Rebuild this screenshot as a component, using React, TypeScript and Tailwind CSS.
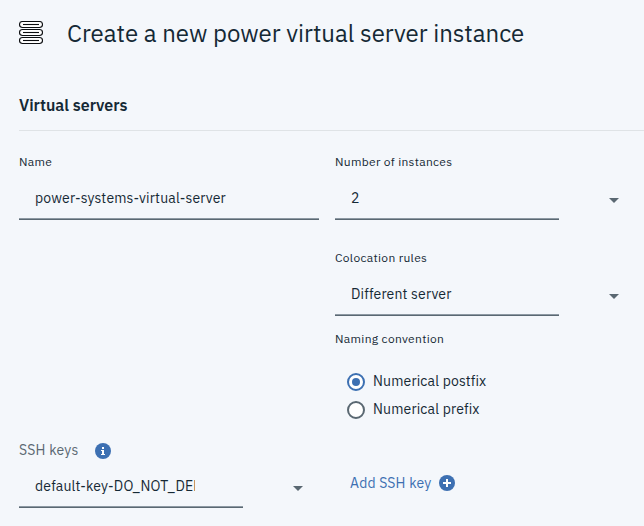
import React from "react";

function ServerIcon() {
  return (
    <svg width="24" height="24" viewBox="0 0 24 24" fill="none" stroke="#0b0d10" strokeWidth="1.1" className="mt-[21px] shrink-0 self-start">
      {[0.5, 8.5, 16.5].map((y) => (
        <g key={y}>
          <rect x="0.5" y={y} width="23" height="6" rx="3" fill="#fff" />
          <path d={`M4 ${y + 3}H20`} />
        </g>
      ))}
    </svg>
  );
}

function Caret() {
  return (
    <svg width="10" height="5" viewBox="0 0 10 5" fill="#5a6872" className="shrink-0">
      <path d="M0 0h10L5 5z" />
    </svg>
  );
}

function Label({ children }: { children: React.ReactNode }) {
  return <div className="h-4 whitespace-nowrap text-[12px] leading-4 tracking-[0.32px]">{children}</div>;
}

const field =
  "flex h-10 items-center whitespace-nowrap border-b border-[#5a6872] pb-0.5 pl-4 text-[14px] tracking-[0.16px] shadow-[inset_0_-1px_0_#8d99a3]";

function Radio({ label, checked = false }: { label: string; checked?: boolean }) {
  return (
    <label className="flex h-7 items-center text-[14px]">
      <span
        className={
          "flex size-[18px] items-center justify-center rounded-full border-2 bg-white " +
          (checked ? "border-[#3d70b2]" : "border-[#5a6872]")
        }
      >
        {checked && <span className="size-2 rounded-full bg-[#3d70b2]" />}
      </span>
      <span className="ml-2 whitespace-nowrap pb-0.5 tracking-[0.16px]">{label}</span>
    </label>
  );
}

export default function App() {
  return (
    <main className="h-[526px] w-[644px] overflow-hidden bg-[#f4f7fb] pl-[19px] font-['IBM_Plex_Sans',Roboto,sans-serif] text-[#152935]">
      <header className="flex h-[67px] items-center gap-6">
        <ServerIcon />
        <h1 className="whitespace-nowrap pb-0.5 text-[24px] leading-8 font-normal">
          Create a new power virtual server instance
        </h1>
      </header>
      <h2 className="flex h-16 items-end border-b border-[#dfe3e6] pb-[13px] text-[16px] leading-6 font-semibold">
        Virtual servers
      </h2>

      <div className="flex h-[307px] gap-4 pt-[23px]">
        <section className="w-[300px]">
          <Label>Name</Label>
          <div className={field + " mt-[10px]"}>power-systems-virtual-server</div>
        </section>

        <section className="w-[309px]">
          <Label>Number of instances</Label>
          <div className="mt-[10px] flex items-center">
            <div className={field + " w-[224px]"}>2</div>
            <span className="ml-[50px]"><Caret /></span>
          </div>

          <div className="mt-[30px]">
            <Label>Colocation rules</Label>
            <div className="mt-[10px] flex items-center">
              <div className={field + " w-[224px]"}>Different server</div>
              <span className="ml-[50px]"><Caret /></span>
            </div>
          </div>

          <div className="mt-[15px]">
            <Label>Naming convention</Label>
            <div className="mt-[21px] pl-3">
              <Radio label="Numerical postfix" checked />
              <Radio label="Numerical prefix" />
            </div>
          </div>
        </section>
      </div>

      <section className="pt-px">
        <div className="flex h-6 items-center">
          <span className="w-[60px] whitespace-nowrap pb-0.5 text-[14px] tracking-[0.2px] text-[#5a6872]">SSH keys</span>
          <svg width="16" height="16" viewBox="0 0 16 16" className="ml-4">
            <circle cx="8" cy="8" r="8" fill="#3d70b2" />
            <path d="M7 4h2v2H7zM6 7h3v4h1v1H6v-1h1V8H6z" fill="#fff" />
          </svg>
        </div>
        <div className="mt-[5px] flex items-center">
          <div className={field + " w-[224px]"}>
            <span className="w-[160px] overflow-hidden">default-key-DO_NOT_DEL</span>
          </div>
          <span className="ml-[50px]"><Caret /></span>
          <button className="mb-[10px] ml-[47px] flex items-center gap-2 text-[14px] text-[#3d70b2]">
            <span className="w-[81px] whitespace-nowrap text-left tracking-[0.16px]">Add SSH key</span>
            <svg width="16" height="16" viewBox="0 0 16 16">
              <circle cx="8" cy="8" r="8" fill="#3d70b2" />
              <path d="M8 4v8M4 8h8" stroke="#fff" strokeWidth="2" />
            </svg>
          </button>
        </div>
      </section>
    </main>
  );
}
